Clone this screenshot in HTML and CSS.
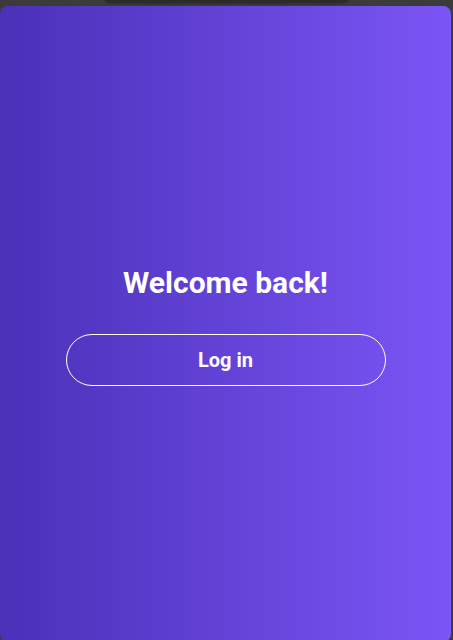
FILE: index.html
```html
<!DOCTYPE html>
<html lang="en">
<head>
<meta charset="utf-8">
<link rel="stylesheet" href="styles.css">
<title>Welcome back</title>
</head>
<body>
<div class="notch"></div>
<main class="panel">
  <div class="content">
    <h1 class="title">Welcome back!</h1>
    <button class="login">Log in</button>
  </div>
</main>
</body>
</html>
```
FILE: styles.css
```css
html, body {
  margin: 0;
  padding: 0;
  background: #3b3b3b;
  width: 453px;
  height: 640px;
  overflow: hidden;
  font-family: Roboto, "Liberation Sans", sans-serif;
}
body {
  position: relative;
  padding-top: 6px;
  box-sizing: border-box;
}
.notch {
  position: absolute;
  top: -6px;
  left: 103px;
  width: 247px;
  height: 8px;
  background: #2b2b2b;
  border-radius: 0 0 8px 8px;
  box-shadow: 0 1px 3px rgba(0,0,0,0.4);
}
.panel {
  width: 451px;
  height: 636px;
  border-radius: 8px;
  background: linear-gradient(to right, #4a31b8, #7b55f5);
  display: flex;
  align-items: center;
  justify-content: center;
}
.content {
  display: flex;
  flex-direction: column;
  align-items: center;
  gap: 33px;
  margin-top: 2px;
}
.title {
  margin: 0;
  color: #fff;
  font-size: 30px;
  line-height: 36px;
  font-weight: 700;
}
.login {
  width: 320px;
  height: 52px;
  border: 1px solid #fff;
  border-radius: 26px;
  background: transparent;
  color: #fff;
  font-family: Roboto, "Liberation Sans", sans-serif;
  font-size: 20px;
  font-weight: 700;
}
```
